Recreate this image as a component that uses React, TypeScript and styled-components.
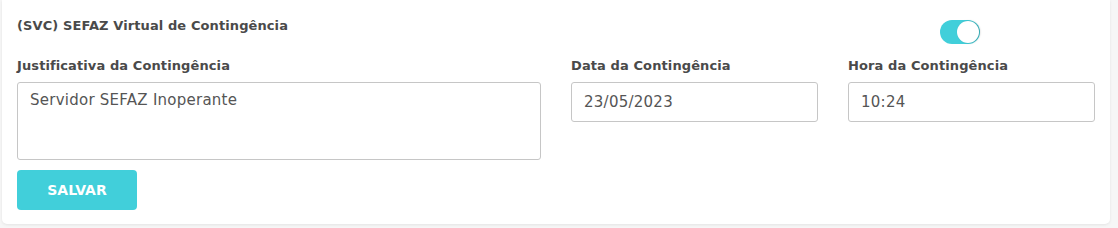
import styled, { createGlobalStyle } from 'styled-components';

const GlobalStyle = createGlobalStyle`
  html, body {
    margin: 0;
    padding: 0;
    background: #f6f6f6;
    font-family: "DejaVu Sans", "Liberation Sans", sans-serif;
  }
  * { box-sizing: border-box; }
`;

const Page = styled.div`
  padding: 0 8px 4px 2px;
`;

const Card = styled.div`
  background: #fff;
  border-radius: 0 0 5px 5px;
  box-shadow: 0 1px 3px rgba(0, 0, 0, 0.08);
  padding: 15px 15px 14px 15px;
`;

const Grid = styled.div`
  display: grid;
  grid-template-columns: 524px 247px 247px;
  column-gap: 30px;
`;

const Title = styled.div`
  font-size: 13px;
  font-weight: 700;
  letter-spacing: 0.1px;
  line-height: 22px;
  color: #4a4a4a;
`;

const ToggleWrap = styled.label`
  margin: 5px 0 0 92px;
  position: relative;
  width: 40px;
  height: 24px;
  display: block;
`;

const Track = styled.span<{ $on: boolean }>`
  position: absolute;
  inset: 0;
  border-radius: 12px;
  background: ${(p) => (p.$on ? '#41cfda' : '#ccc')};
`;

const Knob = styled.span<{ $on: boolean }>`
  position: absolute;
  top: 1px;
  left: ${(p) => (p.$on ? '17px' : '1px')};
  width: 22px;
  height: 22px;
  border-radius: 50%;
  background: #fff;
  box-shadow: 1px 0 2px rgba(0, 0, 0, 0.25);
`;

const Field = styled.div`
  margin-top: 13px;
  display: flex;
  flex-direction: column;
`;

const Label = styled.div`
  font-size: 13px;
  font-weight: 700;
  letter-spacing: 0.1px;
  line-height: 18px;
  color: #4a4a4a;
  margin-bottom: 7px;
`;

const Input = styled.div<{ $tall?: boolean }>`
  height: ${(p) => (p.$tall ? '78px' : '40px')};
  border: 1px solid #c6c6c6;
  border-radius: 3px;
  padding: ${(p) => (p.$tall ? '6px 12px' : '8px 12px')};
  font-size: 15px;
  letter-spacing: 0.25px;
  line-height: 22px;
  color: #555;
`;

const Button = styled.button`
  margin-top: 10px;
  width: 120px;
  height: 40px;
  border: none;
  border-radius: 4px;
  background: #41cfda;
  color: #fff;
  font-family: inherit;
  font-size: 14px;
  font-weight: 700;
`;

export default function App() {
  const on = true;
  return (
    <>
      <GlobalStyle />
      <Page>
        <Card>
          <Grid>
            <Title>(SVC) SEFAZ Virtual de Contingência</Title>
            <div />
            <ToggleWrap>
              <Track $on={on} />
              <Knob $on={on} />
            </ToggleWrap>
          </Grid>
          <Grid>
            <Field>
              <Label>Justificativa da Contingência</Label>
              <Input $tall>Servidor SEFAZ Inoperante</Input>
            </Field>
            <Field>
              <Label>Data da Contingência</Label>
              <Input>23/05/2023</Input>
            </Field>
            <Field>
              <Label>Hora da Contingência</Label>
              <Input>10:24</Input>
            </Field>
          </Grid>
          <Button>SALVAR</Button>
        </Card>
      </Page>
    </>
  );
}
